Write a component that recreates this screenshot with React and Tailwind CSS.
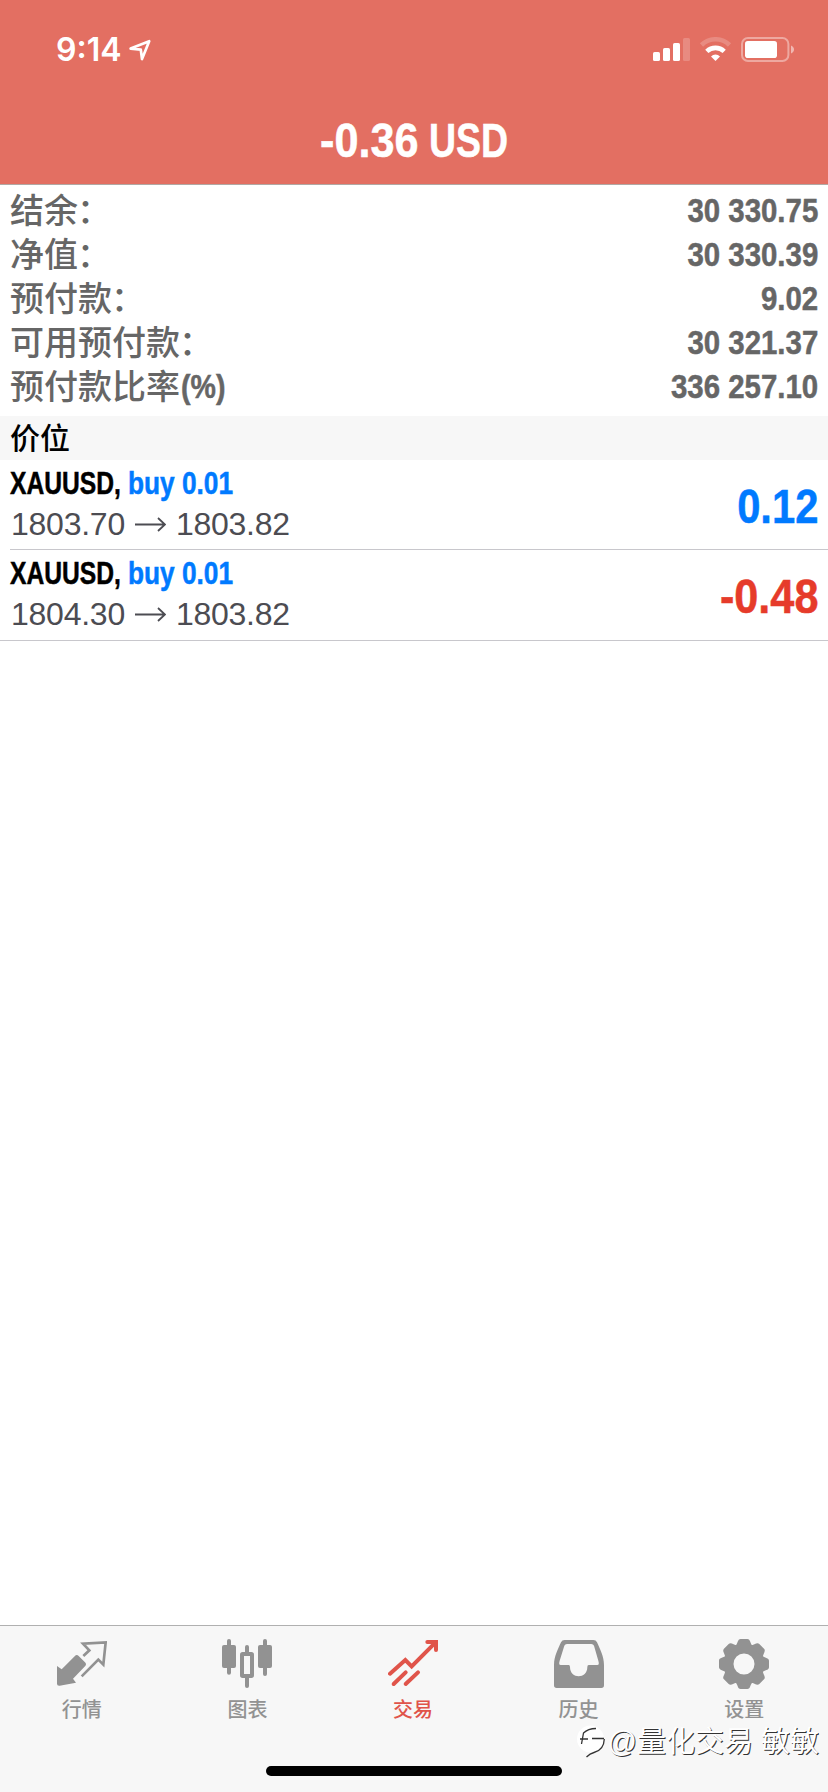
const BOLD = "font-['Liberation_Sans',sans-serif] font-bold whitespace-nowrap [-webkit-text-stroke:0.5px_currentColor]";
const CJK = "font-['Liberation_Sans','Noto_Sans_CJK_SC',sans-serif]";

function StatusBar() {
  return (
    <div className="flex h-[100px] items-start justify-between pl-[56px] pr-[33px] text-white">
      <div className="flex pt-[30px]">
        <span className="font-['Inter',sans-serif] text-[32px] font-semibold leading-[40px]">9:14</span>
        <svg className="ml-[7px] mt-[9px] h-[22px] w-[22px]" viewBox="0 0 22 22" fill="none" stroke="currentColor" strokeWidth="2.7" strokeLinejoin="round">
          <path d="M1.6 9.6 L20.2 2.2 L13 20 L11.8 10.6 Z" />
        </svg>
      </div>
      <div className="flex pt-[37px]">
        <svg className="h-[26px] w-[142px]" viewBox="0 0 142 26" fill="currentColor">
          <rect x="0" y="15" width="7" height="9" rx="1.6" />
          <rect x="10" y="11" width="7" height="13" rx="1.6" />
          <rect x="20" y="6" width="7" height="18" rx="1.6" />
          <rect x="30" y="1" width="7" height="23" rx="1.6" opacity=".2" />
          <path d="M48.500 8 A20 20 0 0 1 76.500 8" fill="none" stroke="currentColor" strokeWidth="4.600" opacity=".2" />
          <path d="M53.800 14.400 A12.600 12.600 0 0 1 71.200 14.400" fill="none" stroke="currentColor" strokeWidth="4.600" />
          <path d="M62.500 24 L58 19.400 A6.500 6.500 0 0 1 67 19.400 Z" />
          <rect x="89" y="1" width="46.400" height="23" rx="6" fill="none" stroke="currentColor" strokeWidth="2" opacity=".4" />
          <rect x="92" y="4" width="32" height="17" rx="2.800" />
          <path d="M138 8.500 C142 10 142 15 138 16.500 Z" opacity=".5" />
        </svg>
      </div>
    </div>
  );
}

const summary = [
  ["结余", "：", "30 330.75"],
  ["净值", "：", "30 330.39"],
  ["预付款", "：", "9.02"],
  ["可用预付款", "：", "30 321.37"],
  ["预付款比率", "(%)", "336 257.10"],
];

function Summary() {
  return (
    <div className="h-[231px] pt-[3px] pl-[10px] pr-[10px] text-[#666666]">
      {summary.map(([label, suffix, value]) => (
        <div key={label} className="flex h-[44px] items-center justify-between">
          <span className={`${CJK} flex pt-[2px] text-[34px] font-medium leading-[44px]`}>
            {label}
            {suffix === "：" ? (
              <span className="-ml-px">{suffix}</span>
            ) : (
              <span className={`${BOLD} -mt-px ml-px origin-left scale-x-[0.84]`}>{suffix}</span>
            )}
          </span>
          <span className={`${BOLD} inline-block origin-right scale-x-[0.865] text-[34px] leading-[44px]`}>{value}</span>
        </div>
      ))}
    </div>
  );
}

function Position({ from, to, profit, profitStyle, height }) {
  return (
    <div className={`flex items-start justify-between px-[10px] ${height}`}>
      <div className="pt-[3px]">
        <div className={`${BOLD} flex text-[32px] leading-[40px] text-black`}>
          <span className="w-[118px] origin-left scale-x-[0.77]">XAUUSD,</span>
          <span className="origin-left scale-x-[0.82] text-[#007aff]">buy 0.01</span>
        </div>
        <div className="flex items-center pl-px font-['Liberation_Sans',sans-serif] text-[32px] leading-[43px] tracking-[-0.25px] text-[#4c4c52]">
          <span>{from}</span>
          <svg className="mx-[10px] h-[16px] w-[31px]" viewBox="0 0 31 16" fill="none" stroke="currentColor" strokeWidth="1.8">
            <path d="M0 7.500 H30 M23 1 L30 7.500 L23 14" />
          </svg>
          <span>{to}</span>
        </div>
      </div>
      <span className={`${BOLD} origin-right pt-[17px] text-[48px] leading-[60px] ${profitStyle}`}>{profit}</span>
    </div>
  );
}

function QuotesIcon() {
  return (
    <svg className="h-[50px] w-[50px]" viewBox="0 0 150 150" fill="currentColor">
      <path d="M0 84 L14 94 L53 55 Q59 48 65 54 L84 73 Q90 79 84 85 L48 122 L57 134 L8 143 Q0 144 0 137 Z" />
      <path d="M79 54 L97 37 L78 17 L146 13 L139 80 L124 65 L74 115" fill="none" stroke="currentColor" strokeWidth="8" />
    </svg>
  );
}

function ChartIcon() {
  return (
    <svg className="h-[50px] w-[50px]" viewBox="0 0 150 150" fill="currentColor">
      <rect x="15" y="3" width="12" height="107" rx="6" />
      <rect x="0" y="21" width="42" height="69" rx="6" />
      <rect x="69" y="21" width="12" height="30" rx="6" />
      <rect x="69" y="112" width="12" height="38" rx="6" />
      <rect x="60" y="48" width="30" height="66" rx="2" fill="none" stroke="currentColor" strokeWidth="12" />
      <rect x="123" y="3" width="12" height="111" rx="6" />
      <rect x="108" y="21" width="42" height="69" rx="6" />
    </svg>
  );
}

function TradeIcon() {
  return (
    <svg className="h-[50px] w-[50px]" viewBox="0 0 150 150" fill="none" stroke="currentColor" strokeWidth="12" strokeLinecap="round">
      <path d="M6 107 L52 66 L71 85 L142 14" />
      <path d="M118 12 H144 V36" />
      <path d="M17 138 L53 103 M53 138 L90 103" />
    </svg>
  );
}

function HistoryIcon() {
  return (
    <svg className="h-[50px] w-[50px]" viewBox="0 0 150 150" fill="currentColor" fillRule="evenodd">
      <path d="M32 6 H118 Q126 6 129 13 C138 34 150 54 150 82 V142 Q150 150 142 150 H8 Q0 150 0 142 V82 C0 54 12 34 21 13 Q24 6 32 6 Z M39 18 Q33 18 31 23 L17 68 Q13 81 20 81 H44 Q48 81 48 87 C48 124 100 124 100 87 Q100 81 104 81 H130 Q137 81 133 68 L120 23 Q118 18 112 18 Z" />
    </svg>
  );
}

function SettingsIcon() {
  return (
    <svg className="h-[50px] w-[50px]" viewBox="-75 -78 150 150" fill="none" stroke="currentColor" overflow="visible">
      <circle r="46" strokeWidth="29" />
      <g fill="currentColor" stroke="none">
        {[0, 45, 90, 135, 180, 225, 270, 315].map((a) => (
          <path key={a} transform={`rotate(${a})`} d="M-27 -53 C-18 -60 -20 -75 -10 -75 H10 C20 -75 18 -60 27 -53 Z" />
        ))}
      </g>
    </svg>
  );
}

const tabs = [
  ["行情", QuotesIcon],
  ["图表", ChartIcon],
  ["交易", TradeIcon],
  ["历史", HistoryIcon],
  ["设置", SettingsIcon],
];

function TabBar() {
  return (
    <div className="relative flex h-[167px] flex-col items-center justify-between border-t border-[#b0b0b0] bg-[#f7f7f7] pb-[16px]">
      <div className="-ml-[2px] grid w-[828px] grid-cols-5 pt-[12px]">
        {tabs.map(([name, Icon]) => (
          <div key={name} className={`flex flex-col items-center ${name === "交易" ? "text-[#e0544a]" : "text-[#929292]"}`}>
            <Icon />
            <span className={`${CJK} mt-[7px] text-[20px] font-medium leading-[30px]`}>{name}</span>
          </div>
        ))}
      </div>
      <div className="h-[10px] w-[296px] rounded-full bg-black" />
      <div className="absolute right-[9px] top-[96px] flex items-center text-white">
        <svg className="mr-[2px] h-[34px] w-[30px]" viewBox="0 0 30 34">
          <circle cx="14.500" cy="14" r="13.500" fill="#fff" />
          <g fill="none" stroke="#333" strokeWidth="1.300">
            <path d="M28.300 14 C28 22 24 26 18 27.500 Q14 28.500 10.500 32" />
            <path d="M5.500 19 L7.500 8 Q12 3.500 20 3.500" />
            <path d="M4 14 H12 M16 13.500 H28" />
          </g>
        </svg>
        <span className={`${CJK} whitespace-pre text-[29px] leading-[40px] [text-shadow:1px_1px_0_#333]`}>@量化交易 敏敏</span>
      </div>
    </div>
  );
}

export default function App() {
  return (
    <div className="flex h-[1792px] w-[828px] flex-col overflow-hidden bg-white">
      <header className="h-[185px] border-b border-[#b2a8a4] bg-[#e36f62]">
        <StatusBar />
        <div className={`${BOLD} flex justify-center pt-[11px] text-[48px] leading-[60px] text-white`}>
          <span className="w-[109px] origin-left scale-x-[0.9]">-0.36</span>
          <span className="w-[80px]">
            <span className="inline-block origin-left scale-x-[0.78]">USD</span>
          </span>
        </div>
      </header>
      <Summary />
      <div className={`${CJK} h-[44px] bg-[#f7f7f7] pl-[10px] text-[30px] font-medium leading-[46px] text-black`}>价位</div>
      <Position from="1803.70" to="1803.82" profit="0.12" profitStyle="scale-x-[0.87] text-[#007aff]" height="h-[89px]" />
      <div className="ml-[10px] h-px bg-[#c8c7cc]" />
      <Position from="1804.30" to="1803.82" profit="-0.48" profitStyle="scale-x-[0.9] text-[#e63b2a]" height="h-[90px]" />
      <div className="h-px bg-[#c8c7cc]" />
      <div className="flex-1" />
      <TabBar />
    </div>
  );
}
